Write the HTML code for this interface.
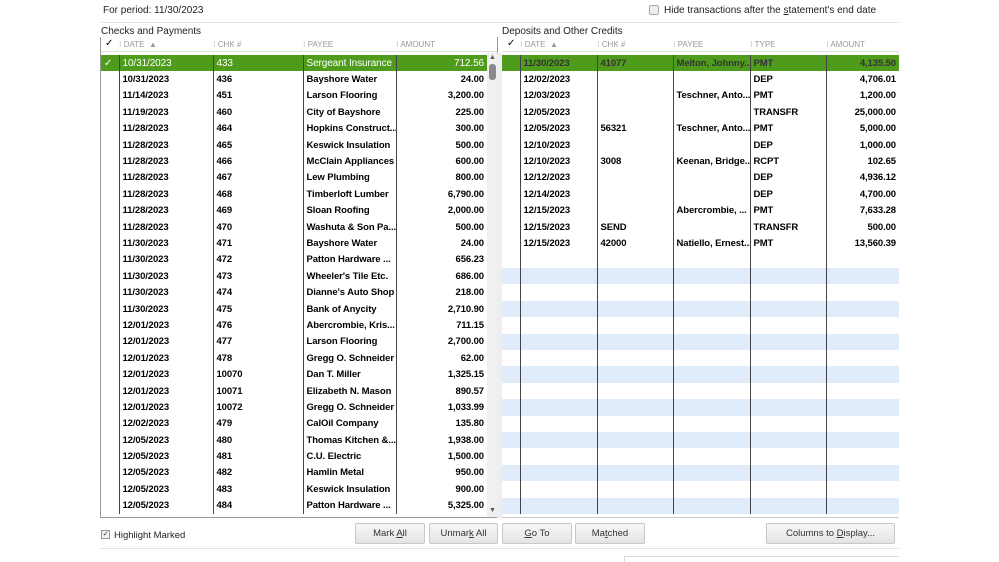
<!DOCTYPE html>
<html><head><meta charset="utf-8"><style>
*{margin:0;padding:0;box-sizing:border-box}
body{width:999px;height:562px;background:#fff;font-family:"Liberation Sans",Arial,sans-serif;position:relative;overflow:hidden;color:#000}
.a{position:absolute}
.lbl{font-size:10px;color:#222}
table{border-collapse:collapse;table-layout:fixed;position:absolute}
td{height:16.4px;font-size:9.5px;font-weight:bold;padding:0 3px;white-space:nowrap;overflow:hidden;border-left:1.5px solid #444;letter-spacing:-0.1px}
td:first-child{border-left:none}
td.r{text-align:right}
tr.sel td{background:#4f9c1c;color:#fff;font-weight:normal;font-size:10px}
tr.selr td{background:#4f9c1c;color:#333}
tr.b td{background:#e1ecfb}
.hd{position:absolute;top:37px;height:15px;font-size:8px;color:#999;background:#fff}
.hd span{position:absolute;top:3px}
.btn{position:absolute;top:523px;height:21px;border:1px solid #c8c8c8;background:linear-gradient(#f6f6f6,#e4e4e4);font-size:9.5px;color:#333;text-align:center;line-height:19px;border-radius:2px}
</style></head><body>
<div class="a lbl" style="left:103px;top:5px">For period: 11/30/2023</div>
<div class="a" style="left:649px;top:5px;width:10px;height:10px;border:1px solid #aaa;background:#eee;border-radius:2px"></div>
<div class="a lbl" style="left:664px;top:5px">Hide transactions after the <u>s</u>tatement's end date</div>
<div class="a" style="left:100px;top:22px;width:799px;height:1px;background:#e4e4e4"></div>
<div class="a lbl" style="left:101px;top:26px">Checks and Payments</div>
<div class="a lbl" style="left:502px;top:26px">Deposits and Other Credits</div>

<div class="a" style="left:100px;top:37px;width:398px;height:481px;border:1px solid #999"></div>
<div class="hd" style="left:101px;width:396px;border-bottom:1px solid #ddd">
<span style="left:4px;color:#000;font-size:10px;top:1px">✓</span><span style="left:18px">⁝ DATE &nbsp;▲</span><span style="left:112px">⁝ CHK #</span><span style="left:202px">⁝ PAYEE</span><span style="left:295px">⁝ AMOUNT</span></div>
<table style="left:101px;top:55px;width:386px">
<colgroup><col style="width:18px"><col style="width:94px"><col style="width:90px"><col style="width:93px"><col style="width:91px"></colgroup>
<tr class="sel"><td>✓</td><td>10/31/2023</td><td>433</td><td>Sergeant Insurance</td><td class="r">712.56</td></tr>
<tr><td></td><td>10/31/2023</td><td>436</td><td>Bayshore Water</td><td class="r">24.00</td></tr>
<tr><td></td><td>11/14/2023</td><td>451</td><td>Larson Flooring</td><td class="r">3,200.00</td></tr>
<tr><td></td><td>11/19/2023</td><td>460</td><td>City of Bayshore</td><td class="r">225.00</td></tr>
<tr><td></td><td>11/28/2023</td><td>464</td><td>Hopkins Construct...</td><td class="r">300.00</td></tr>
<tr><td></td><td>11/28/2023</td><td>465</td><td>Keswick Insulation</td><td class="r">500.00</td></tr>
<tr><td></td><td>11/28/2023</td><td>466</td><td>McClain Appliances</td><td class="r">600.00</td></tr>
<tr><td></td><td>11/28/2023</td><td>467</td><td>Lew Plumbing</td><td class="r">800.00</td></tr>
<tr><td></td><td>11/28/2023</td><td>468</td><td>Timberloft Lumber</td><td class="r">6,790.00</td></tr>
<tr><td></td><td>11/28/2023</td><td>469</td><td>Sloan Roofing</td><td class="r">2,000.00</td></tr>
<tr><td></td><td>11/28/2023</td><td>470</td><td>Washuta &amp; Son Pa...</td><td class="r">500.00</td></tr>
<tr><td></td><td>11/30/2023</td><td>471</td><td>Bayshore Water</td><td class="r">24.00</td></tr>
<tr><td></td><td>11/30/2023</td><td>472</td><td>Patton Hardware ...</td><td class="r">656.23</td></tr>
<tr><td></td><td>11/30/2023</td><td>473</td><td>Wheeler's Tile Etc.</td><td class="r">686.00</td></tr>
<tr><td></td><td>11/30/2023</td><td>474</td><td>Dianne's Auto Shop</td><td class="r">218.00</td></tr>
<tr><td></td><td>11/30/2023</td><td>475</td><td>Bank of Anycity</td><td class="r">2,710.90</td></tr>
<tr><td></td><td>12/01/2023</td><td>476</td><td>Abercrombie, Kris...</td><td class="r">711.15</td></tr>
<tr><td></td><td>12/01/2023</td><td>477</td><td>Larson Flooring</td><td class="r">2,700.00</td></tr>
<tr><td></td><td>12/01/2023</td><td>478</td><td>Gregg O. Schneider</td><td class="r">62.00</td></tr>
<tr><td></td><td>12/01/2023</td><td>10070</td><td>Dan T. Miller</td><td class="r">1,325.15</td></tr>
<tr><td></td><td>12/01/2023</td><td>10071</td><td>Elizabeth N. Mason</td><td class="r">890.57</td></tr>
<tr><td></td><td>12/01/2023</td><td>10072</td><td>Gregg O. Schneider</td><td class="r">1,033.99</td></tr>
<tr><td></td><td>12/02/2023</td><td>479</td><td>CalOil Company</td><td class="r">135.80</td></tr>
<tr><td></td><td>12/05/2023</td><td>480</td><td>Thomas Kitchen &amp;...</td><td class="r">1,938.00</td></tr>
<tr><td></td><td>12/05/2023</td><td>481</td><td>C.U. Electric</td><td class="r">1,500.00</td></tr>
<tr><td></td><td>12/05/2023</td><td>482</td><td>Hamlin Metal</td><td class="r">950.00</td></tr>
<tr><td></td><td>12/05/2023</td><td>483</td><td>Keswick Insulation</td><td class="r">900.00</td></tr>
<tr><td></td><td>12/05/2023</td><td>484</td><td>Patton Hardware ...</td><td class="r">5,325.00</td></tr>
</table>
<div class="a" style="left:487px;top:53px;width:10px;height:464px;background:#f0f0f0"></div>
<div class="a" style="left:489px;top:54px;font-size:7px;color:#555">▲</div>
<div class="a" style="left:489px;top:64px;width:7px;height:16px;background:#8a8a8a;border-radius:3px"></div>
<div class="a" style="left:489px;top:507px;font-size:7px;color:#555">▼</div>
<div class="a" style="left:497px;top:53px;width:5px;height:465px;background:#eee"></div>

<div class="hd" style="left:502px;width:397px;border-bottom:1px solid #ddd">
<span style="left:5px;color:#000;font-size:10px;top:1px">✓</span><span style="left:18px">⁝ DATE &nbsp;▲</span><span style="left:95px">⁝ CHK #</span><span style="left:171px">⁝ PAYEE</span><span style="left:248px">⁝ TYPE</span><span style="left:324px">⁝ AMOUNT</span></div>
<table style="left:502px;top:55px;width:397px">
<colgroup><col style="width:18px"><col style="width:77px"><col style="width:76px"><col style="width:77px"><col style="width:76px"><col style="width:73px"></colgroup>
<tr class="selr"><td></td><td>11/30/2023</td><td>41077</td><td>Melton, Johnny...</td><td>PMT</td><td class="r">4,135.50</td></tr>
<tr><td></td><td>12/02/2023</td><td></td><td></td><td>DEP</td><td class="r">4,706.01</td></tr>
<tr><td></td><td>12/03/2023</td><td></td><td>Teschner, Anto...</td><td>PMT</td><td class="r">1,200.00</td></tr>
<tr><td></td><td>12/05/2023</td><td></td><td></td><td>TRANSFR</td><td class="r">25,000.00</td></tr>
<tr><td></td><td>12/05/2023</td><td>56321</td><td>Teschner, Anto...</td><td>PMT</td><td class="r">5,000.00</td></tr>
<tr><td></td><td>12/10/2023</td><td></td><td></td><td>DEP</td><td class="r">1,000.00</td></tr>
<tr><td></td><td>12/10/2023</td><td>3008</td><td>Keenan, Bridge...</td><td>RCPT</td><td class="r">102.65</td></tr>
<tr><td></td><td>12/12/2023</td><td></td><td></td><td>DEP</td><td class="r">4,936.12</td></tr>
<tr><td></td><td>12/14/2023</td><td></td><td></td><td>DEP</td><td class="r">4,700.00</td></tr>
<tr><td></td><td>12/15/2023</td><td></td><td>Abercrombie, ...</td><td>PMT</td><td class="r">7,633.28</td></tr>
<tr><td></td><td>12/15/2023</td><td>SEND</td><td></td><td>TRANSFR</td><td class="r">500.00</td></tr>
<tr><td></td><td>12/15/2023</td><td>42000</td><td>Natiello, Ernest...</td><td>PMT</td><td class="r">13,560.39</td></tr>
<tr><td></td><td></td><td></td><td></td><td></td><td></td></tr>
<tr class="b"><td></td><td></td><td></td><td></td><td></td><td></td></tr>
<tr><td></td><td></td><td></td><td></td><td></td><td></td></tr>
<tr class="b"><td></td><td></td><td></td><td></td><td></td><td></td></tr>
<tr><td></td><td></td><td></td><td></td><td></td><td></td></tr>
<tr class="b"><td></td><td></td><td></td><td></td><td></td><td></td></tr>
<tr><td></td><td></td><td></td><td></td><td></td><td></td></tr>
<tr class="b"><td></td><td></td><td></td><td></td><td></td><td></td></tr>
<tr><td></td><td></td><td></td><td></td><td></td><td></td></tr>
<tr class="b"><td></td><td></td><td></td><td></td><td></td><td></td></tr>
<tr><td></td><td></td><td></td><td></td><td></td><td></td></tr>
<tr class="b"><td></td><td></td><td></td><td></td><td></td><td></td></tr>
<tr><td></td><td></td><td></td><td></td><td></td><td></td></tr>
<tr class="b"><td></td><td></td><td></td><td></td><td></td><td></td></tr>
<tr><td></td><td></td><td></td><td></td><td></td><td></td></tr>
<tr class="b"><td></td><td></td><td></td><td></td><td></td><td></td></tr>
</table>
<div class="a" style="left:502px;top:517px;width:397px;height:1px;background:#ccc"></div>

<div class="a" style="left:101px;top:530px;width:9px;height:9px;border:1px solid #999;background:#eee;font-size:7px;line-height:7px;text-align:center;color:#333">✓</div>
<div class="a lbl" style="left:114px;top:530px;font-size:9.5px">Highlight Marked</div>
<div class="btn" style="left:355px;width:70px">Mark <u>A</u>ll</div>
<div class="btn" style="left:429px;width:69px">Unmar<u>k</u> All</div>
<div class="btn" style="left:502px;width:70px"><u>G</u>o To</div>
<div class="btn" style="left:575px;width:70px">Ma<u>t</u>ched</div>
<div class="btn" style="left:766px;width:129px">Columns to <u>D</u>isplay...</div>
<div class="a" style="left:100px;top:548px;width:799px;height:1px;background:#e4e4e4"></div>
<div class="a" style="left:624px;top:556px;width:275px;height:6px;border-top:1px solid #ddd;border-left:1px solid #ddd"></div>
</body></html>
